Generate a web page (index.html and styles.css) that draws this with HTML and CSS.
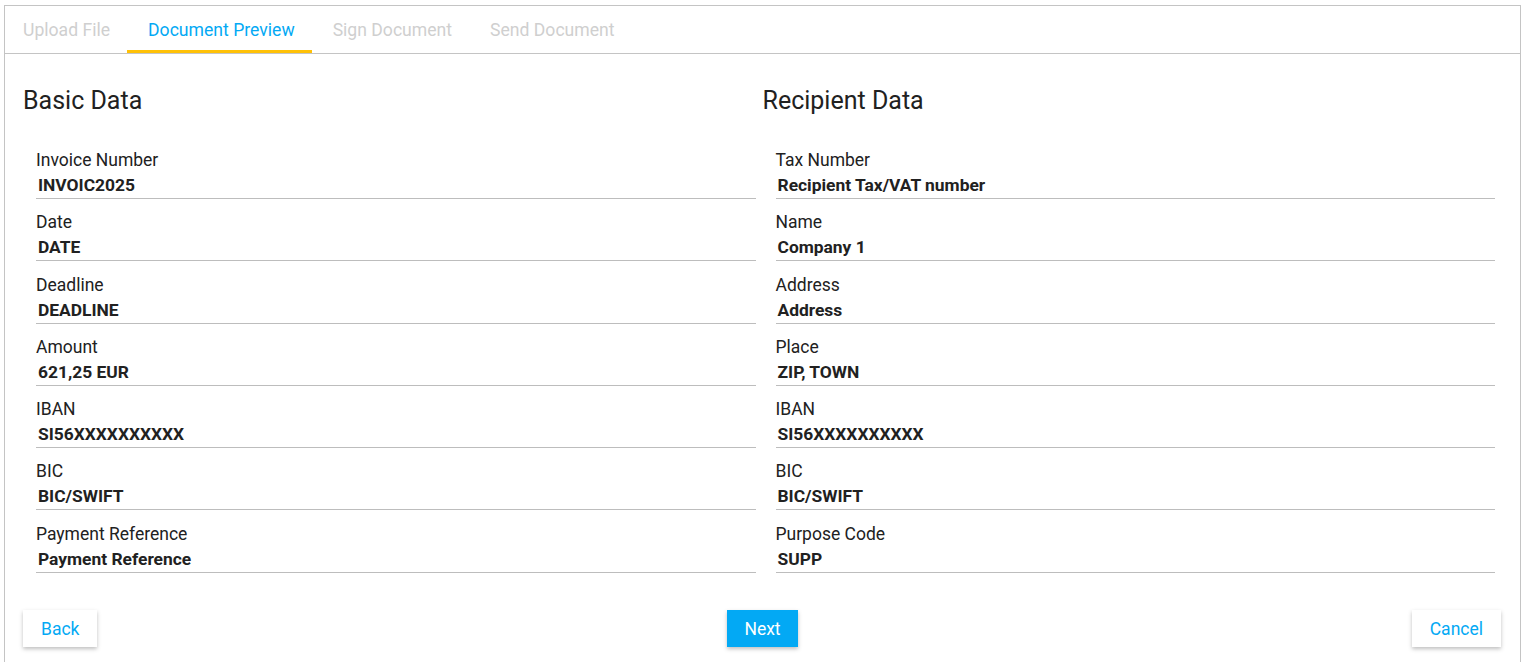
FILE: index.html
```html
<!DOCTYPE html>
<html>
<head lang="en">
    <meta charset="UTF-8">
    <title>Document Preview</title>
    <link rel="stylesheet" href="styles.css">
</head>
<body>
<div class="wizard">
    <div class="tabs">
        <div class="tab">Upload File</div>
        <div class="tab active">Document Preview</div>
        <div class="tab">Sign Document</div>
        <div class="tab">Send Document</div>
    </div>
    <div class="content">
        <div class="cols">
            <div class="col">
                <h2>Basic Data</h2>
                <div class="field"><label>Invoice Number</label><div class="val">INVOIC2025</div></div>
                <div class="field"><label>Date</label><div class="val">DATE</div></div>
                <div class="field"><label>Deadline</label><div class="val">DEADLINE</div></div>
                <div class="field"><label>Amount</label><div class="val">621,25 EUR</div></div>
                <div class="field"><label>IBAN</label><div class="val">SI56XXXXXXXXXX</div></div>
                <div class="field"><label>BIC</label><div class="val">BIC/SWIFT</div></div>
                <div class="field"><label>Payment Reference</label><div class="val">Payment Reference</div></div>
            </div>
            <div class="col">
                <h2>Recipient Data</h2>
                <div class="field"><label>Tax Number</label><div class="val">Recipient Tax/VAT number</div></div>
                <div class="field"><label>Name</label><div class="val">Company 1</div></div>
                <div class="field"><label>Address</label><div class="val">Address</div></div>
                <div class="field"><label>Place</label><div class="val">ZIP, TOWN</div></div>
                <div class="field"><label>IBAN</label><div class="val">SI56XXXXXXXXXX</div></div>
                <div class="field"><label>BIC</label><div class="val">BIC/SWIFT</div></div>
                <div class="field"><label>Purpose Code</label><div class="val">SUPP</div></div>
            </div>
        </div>
        <div class="actions">
            <button class="btn">Back</button>
            <button class="btn primary">Next</button>
            <button class="btn cancel">Cancel</button>
        </div>
    </div>
</div>
</body>
</html>
```
FILE: styles.css
```css
*{margin:0;padding:0;box-sizing:border-box;}
html,body{height:100%;overflow:hidden;}
body{font-family:Roboto,"Liberation Sans",sans-serif;color:#212121;background:#fff;}
.wizard{margin:5px 5px 0 4px;border:1px solid #c4c4c4;border-bottom:0;min-height:700px;}
.tabs{display:flex;height:48px;border-bottom:1px solid #c4c4c4;}
.tab{height:47px;line-height:48px;padding:0 17px 0 21px;font-size:17.6px;color:#cfcfcf;border-bottom:3px solid transparent;}
.tab:first-child{padding-left:18px;}
.tab.active{color:#03a9f4;border-bottom-color:#ffc107;}
.content{padding:0 18px;}
.cols{display:flex;}
.col{flex:1;}
h2{font-size:25px;font-weight:400;line-height:30px;margin-top:32px;margin-bottom:34px;color:#212121;}
.field{margin:0 7px 13.3px 13px;border-bottom:1px solid #bdbdbd;}
.field label{display:block;font-size:17.5px;line-height:20px;}
.field .val{font-size:17.4px;font-weight:700;line-height:26px;margin-top:2px;padding-left:2px;}
.actions{display:grid;grid-template-columns:1fr auto 1fr;align-items:start;margin-top:24px;}
.btn{justify-self:start;height:37px;padding:0 18px;font-family:Roboto,"Liberation Sans",sans-serif;font-size:17.5px;color:#03a9f4;background:#fff;border:0;box-shadow:0 2px 4px rgba(0,0,0,.25);}
.btn.primary{background:#03a9f4;color:#fff;padding:0 17px;}
.btn.cancel{justify-self:end;margin-right:1px;}
```
